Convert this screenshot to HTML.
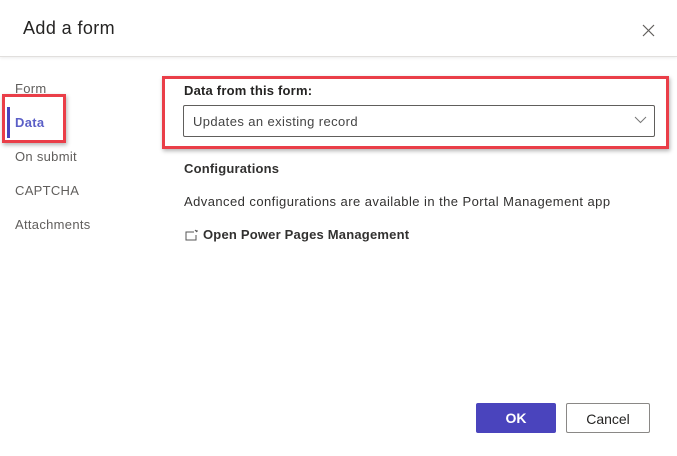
<!DOCTYPE html>
<html><head><style>
body{margin:0;width:677px;height:456px;background:#fff;font-family:"Liberation Sans",sans-serif;position:relative;overflow:hidden;color:#323130}
.a{position:absolute;white-space:nowrap}
.hdr{position:absolute;left:0;top:0;width:677px;height:56px;border-bottom:1px solid #e1dfdd;box-shadow:0 1px 3px rgba(0,0,0,.08)}
.nav{font-size:13px;color:#605e5c;letter-spacing:.3px}
.box{position:absolute;border:3px solid #ea3e48;box-shadow:1px 2px 4px rgba(0,0,0,.3)}
.btn{position:absolute;height:30px;border-radius:2px;font-size:14px;font-weight:bold;text-align:center;line-height:30px;box-sizing:border-box}
</style></head><body>
<div class="hdr"></div>
<div class="a" style="left:23px;top:18px;font-size:18px;color:#252423;letter-spacing:.4px">Add a form</div>
<svg class="a" style="left:642px;top:24px" width="13" height="13"><path d="M1 1L12 12M12 1L1 12" stroke="#605e5c" stroke-width="1.2"/></svg>
<div class="a nav" style="left:15px;top:81px">Form</div>
<div class="a" style="left:7px;top:107px;width:3px;height:31px;background:#4a44bd"></div>
<div class="a nav" style="left:15px;top:115px;color:#5b5fc7;font-weight:bold">Data</div>
<div class="a nav" style="left:15px;top:149px">On submit</div>
<div class="a nav" style="left:15px;top:183px">CAPTCHA</div>
<div class="a nav" style="left:15px;top:217px">Attachments</div>
<div class="box" style="left:2px;top:94px;width:58px;height:43px"></div>
<div class="a" style="left:184px;top:83px;font-size:13px;font-weight:bold;color:#252423;letter-spacing:.2px">Data from this form:</div>
<div class="a" style="left:183px;top:105px;width:470px;height:30px;border:1px solid #605e5c;border-radius:2px"></div>
<div class="a" style="left:193px;top:114px;font-size:13px;color:#444;letter-spacing:.4px">Updates an existing record</div>
<svg class="a" style="left:634px;top:116px" width="13" height="8"><path d="M1 1L6.5 6.5L12 1" stroke="#777" fill="none" stroke-width="1"/></svg>
<div class="box" style="left:162px;top:76px;width:501px;height:67px"></div>
<div class="a" style="left:184px;top:161px;font-size:13px;font-weight:bold;color:#323130;letter-spacing:.2px">Configurations</div>
<div class="a" style="left:184px;top:194px;font-size:13px;color:#323130;letter-spacing:.44px">Advanced configurations are available in the Portal Management app</div>
<svg class="a" style="left:185px;top:229px" width="14" height="12"><path d="M9 3H1V11H11V6" stroke="#555" fill="none"/><path d="M10 1L12 3M12 1V3" stroke="#555" fill="none"/></svg>
<div class="a" style="left:203px;top:227px;font-size:13px;font-weight:bold;color:#323130;letter-spacing:.2px">Open Power Pages Management</div>
<div class="btn" style="left:476px;top:403px;width:80px;background:#4a44bd;color:#fff">OK</div>
<div class="btn" style="left:566px;top:403px;width:84px;border:1px solid #8a8886;color:#252423;font-weight:normal">Cancel</div>
</body></html>
